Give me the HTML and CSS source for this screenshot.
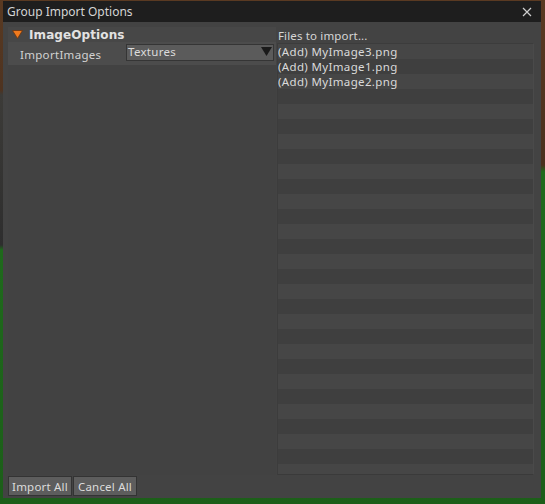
FILE: index.html
```html
<!DOCTYPE html>
<html>
<head>
<meta charset="utf-8">
<link rel="stylesheet" href="styles.css">
</head>
<body>
<div class="window">
  <div class="titlebar">
    <span class="title">Group Import Options</span>
    <svg class="close" width="10" height="10" viewBox="0 0 10 10"><path d="M1 1L9 9M9 1L1 9" stroke="#cfcfcf" stroke-width="1.2"/></svg>
  </div>
  <div class="content">
    <div class="main">
      <div class="left">
        <div class="group-header">
          <svg class="arrow" width="11" height="9" viewBox="0 0 11 9"><path d="M0.5 0.5H10.5L5.5 8.5Z" fill="#f07a1e" stroke="#6a3510" stroke-width="0.8"/></svg>
          <span class="group-name">ImageOptions</span>
        </div>
        <div class="prop-row">
          <span class="prop-label">ImportImages</span>
          <div class="combo">
            <span>Textures</span>
            <svg class="combo-arrow" width="11" height="9" viewBox="0 0 11 9"><path d="M0 0H11L5.5 9Z" fill="#1a1a1a"/></svg>
          </div>
        </div>
      </div>
      <div class="right">
        <div class="files-label">Files to import...</div>
        <div class="list">
          <div class="item">(Add) MyImage3.png</div>
          <div class="item">(Add) MyImage1.png</div>
          <div class="item">(Add) MyImage2.png</div>
        </div>
      </div>
    </div>
    <div class="buttons">
      <button class="btn">Import All</button>
      <button class="btn">Cancel All</button>
    </div>
  </div>
</div>
</body>
</html>
```
FILE: styles.css
```css
html {
  margin: 0;
  padding: 0;
  background:
    linear-gradient(180deg, #5a3a22 0px, #4e3320 90px, #3c3b38 95px, #2e2e2e 245px, #1f6a1c 250px, #1c5e19 504px) 0 0 / 3px 504px no-repeat,
    linear-gradient(180deg, #5a3a22 0px, #4a301e 165px, #1f6a1c 172px, #1c5e19 504px) 541px 0 / 4px 504px no-repeat,
    linear-gradient(180deg, #5a3a22 0px, #5a3a22 2px, #1d621a 480px, #1c5e19 504px) 0 0 / 545px 504px no-repeat;
  background-color: #1c5e19;
}
body {
  margin: 0;
  width: 545px;
  height: 504px;
  overflow: hidden;
  background: transparent;
  font-family: "Noto Sans", "DejaVu Sans", sans-serif;
  font-size: 11.5px;
  color: #d6d6d6;
  padding: 1px 4px 6px 3px;
  box-sizing: border-box;
}
.window {
  width: 538px;
  height: 497px;
  display: flex;
  flex-direction: column;
  background: #434343;
}
.titlebar {
  height: 21px;
  background: #1e1e1e;
  display: flex;
  align-items: center;
  justify-content: space-between;
  padding: 0 9px 0 4px;
  flex: none;
}
.title {
  color: #d4d4d4;
  font-size: 12px;
}
.close {
  display: block;
}
.content {
  flex: 1;
  display: flex;
  flex-direction: column;
  padding: 5px 4px 1px 5px;
  min-height: 0;
}
.main {
  flex: 1;
  display: flex;
  gap: 1px;
  min-height: 0;
}
.left {
  width: 268px;
  display: flex;
  flex-direction: column;
  background: #424242;
}
.group-header {
  height: 15px;
  display: flex;
  align-items: center;
  background: #474747;
  padding-left: 4px;
  gap: 6px;
}
.arrow {
  display: block;
}
.group-name {
  font-family: "DejaVu Sans", sans-serif;
  font-weight: bold;
  font-size: 12px;
  color: #e2e2e2;
  letter-spacing: 0.1px;
}
.prop-row {
  height: 23px;
  display: flex;
  align-items: center;
  background: #4c4c4c;
  padding-left: 12px;
  padding-right: 2px;
}
.prop-label {
  width: 106px;
  color: #d2d2d2;
  padding-top: 2px;
  letter-spacing: 0.3px;
}
.combo {
  flex: 1;
  height: 17px;
  box-sizing: border-box;
  background: #5b5b5b;
  border: 1px solid #353535;
  display: flex;
  align-items: center;
  justify-content: space-between;
  padding: 0 1px 0 1px;
  color: #dcdcdc;
  margin-top: -2px;
}
.combo span {
  margin-top: -2px;
  letter-spacing: 0.3px;
}
.combo-arrow {
  display: block;
  margin-top: -2px;
}
.right {
  flex: 1;
  display: flex;
  flex-direction: column;
  padding-right: 3px;
}
.files-label {
  height: 15px;
  line-height: 15px;
  padding-left: 1px;
  margin-top: 1px;
  color: #d6d6d6;
  letter-spacing: 0.15px;
}
.list {
  flex: 1;
  border: 1px solid #3c3c3c;
  border-right-color: #4a4a4a;
  border-bottom-color: #3a3a3a;
  background: repeating-linear-gradient(180deg, #464646 0 15px, #3f3f3f 15px 30px);
}
.item {
  height: 15px;
  line-height: 15px;
  color: #dadada;
  white-space: nowrap;
  letter-spacing: 0.35px;
}
.buttons {
  display: flex;
  gap: 1px;
  height: 21px;
  margin-top: 1px;
  align-items: flex-start;
}
.btn {
  font-family: "Noto Sans", "DejaVu Sans", sans-serif;
  font-size: 11.5px;
  letter-spacing: 0.2px;
  color: #dcdcdc;
  background: #5d5d5d;
  border: 1px solid #333333;
  height: 20px;
  width: 64px;
  padding: 0;
  margin: 0;
  line-height: 17px;
}
```
